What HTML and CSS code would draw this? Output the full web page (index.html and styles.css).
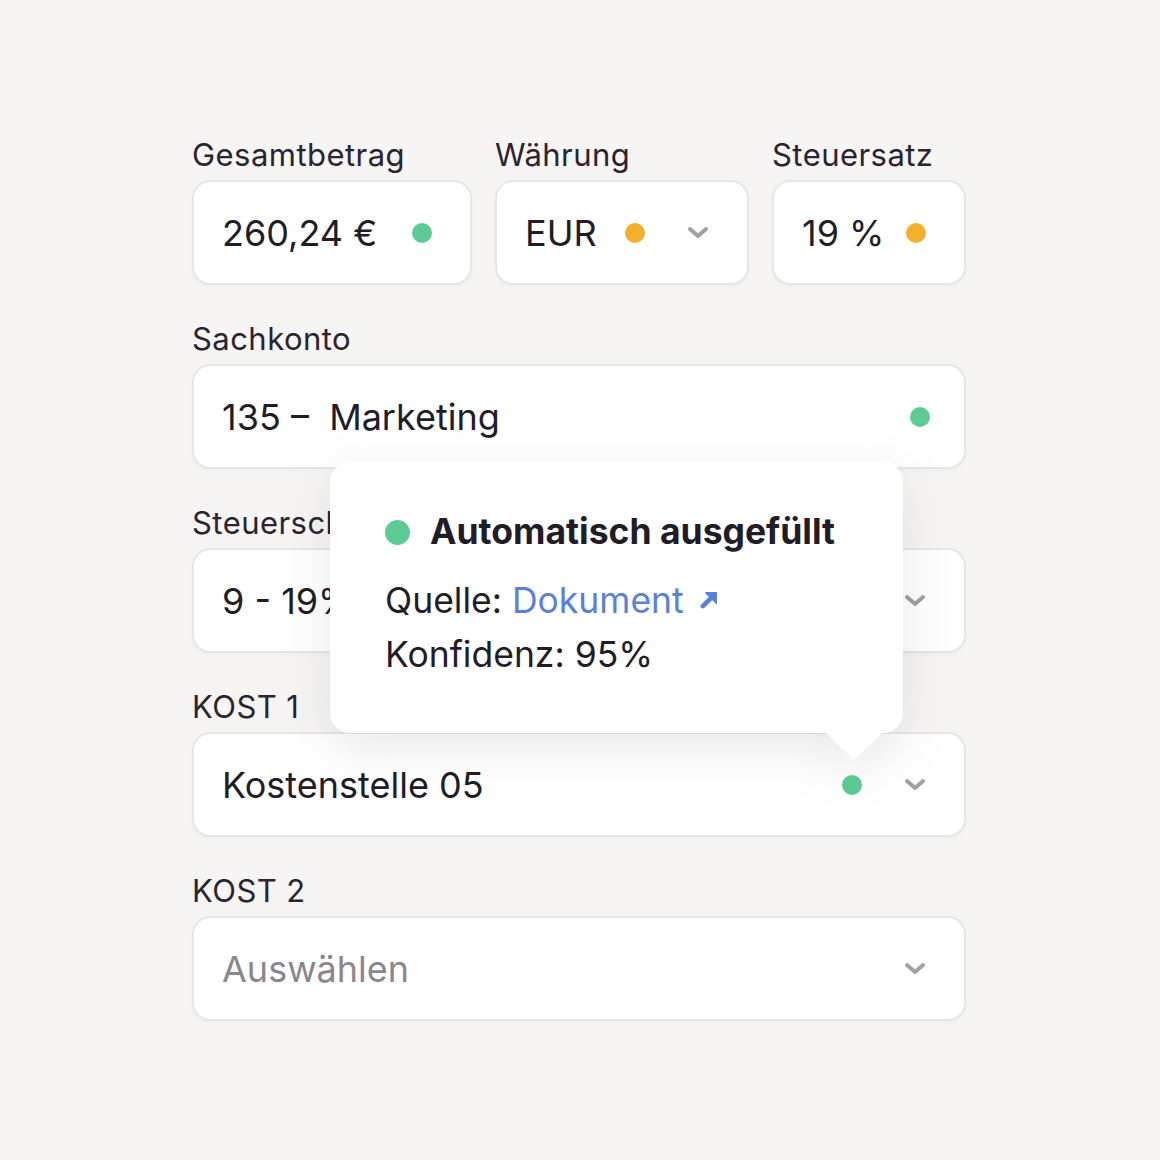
FILE: index.html
```html
<!DOCTYPE html>
<html lang="de">
<head>
<meta charset="utf-8">
<title>Formular</title>
<link rel="stylesheet" href="styles.css">
</head>
<body>
<div class="form">
  <div class="row-top">
    <div class="field">
      <div class="label">Gesamtbetrag</div>
      <div class="box"><span class="value">260,24 €</span><span class="end"><span class="dot green"></span></span></div>
    </div>
    <div class="field">
      <div class="label">Währung</div>
      <div class="box"><span class="value">EUR</span><span class="end"><span class="dot orange"></span><svg class="chev" viewBox="0 0 22 13"><path d="M3 3 L11 10 L19 3"/></svg></span></div>
    </div>
    <div class="field">
      <div class="label">Steuersatz</div>
      <div class="box"><span class="value">19 %</span><span class="end"><span class="dot orange"></span></span></div>
    </div>
  </div>
  <div class="field">
    <div class="label">Sachkonto</div>
    <div class="box wide-dot"><span class="value">135 –&nbsp; Marketing</span><span class="end"><span class="dot green"></span></span></div>
  </div>
  <div class="field">
    <div class="label">Steuerschlüssel</div>
    <div class="box"><span class="value">9 - 19% Vorsteuer</span><span class="end"><svg class="chev" viewBox="0 0 22 13"><path d="M3 3 L11 10 L19 3"/></svg></span></div>
  </div>
  <div class="field">
    <div class="label">KOST 1</div>
    <div class="box"><span class="value">Kostenstelle 05</span><span class="end"><span class="dot green"></span><svg class="chev" viewBox="0 0 22 13"><path d="M3 3 L11 10 L19 3"/></svg></span></div>
  </div>
  <div class="field">
    <div class="label">KOST 2</div>
    <div class="box"><span class="value placeholder">Auswählen</span><span class="end"><svg class="chev" viewBox="0 0 22 13"><path d="M3 3 L11 10 L19 3"/></svg></span></div>
  </div>

  <div class="tooltip">
    <div class="tt-title"><span class="dot green big"></span>Automatisch ausgefüllt</div>
    <div class="tt-line">Quelle: <span class="link">Dokument <svg class="ext" viewBox="0 0 16 16"><path class="ext-line" d="M2.5 13.5 L9.5 6.5"/><path class="ext-head" d="M5 1.5 H14.5 V11 Z"/></svg></span></div>
    <div class="tt-line">Konfidenz: 95%</div>
  </div>
</div>
</body>
</html>
```

FILE: styles.css
```css
* { box-sizing: border-box; }
html, body { margin: 0; padding: 0; }
body {
  background: #f6f5f4;
  font-family: Inter, "Noto Sans", sans-serif;
  color: #221c27;
  width: 1160px;
  height: 1160px;
  overflow: hidden;
}
.form {
  position: relative;
  width: 774px;
  margin-left: 192px;
  padding-top: 136px;
  display: flex;
  flex-direction: column;
  gap: 35px;
}
.row-top {
  display: grid;
  grid-template-columns: 280px 254px 194px;
  gap: 23px;
}
.field {
  display: flex;
  flex-direction: column;
  gap: 7px;
}
.label {
  font-size: 31px;
  line-height: 37px;
  letter-spacing: 0.45px;
  color: #2a2430;
}
.box {
  height: 105px;
  background: #fff;
  border: 2px solid #e8e6e6;
  border-radius: 18px;
  box-shadow: 0 2px 3px rgba(0,0,0,0.03);
  display: flex;
  align-items: center;
  justify-content: space-between;
  padding: 0 38px 0 28px;
}
.box.wide-dot { padding-right: 34px; }
.value {
  font-size: 36px;
  white-space: nowrap;
  color: #221c27;
}
.value.placeholder { color: #8b858c; }
.end {
  display: flex;
  align-items: center;
  gap: 42px;
}
.dot {
  display: inline-block;
  width: 20px;
  height: 20px;
  border-radius: 50%;
  flex: none;
}
.dot.green { background: #5dcb94; }
.dot.orange { background: #f3b02c; }
.chev {
  width: 22px;
  height: 13px;
  fill: none;
  stroke: #a59ea6;
  stroke-width: 4;
  stroke-linecap: round;
  stroke-linejoin: round;
}
.tooltip {
  position: absolute;
  left: 138px;
  top: 462px;
  width: 573px;
  height: 271px;
  background: #fff;
  border-radius: 20px;
  padding: 46px 30px 0 55px;
  filter: drop-shadow(0 14px 24px rgba(40,30,40,0.10));
}
.tooltip::after {
  content: "";
  position: absolute;
  left: 495px;
  bottom: -26px;
  width: 58px;
  height: 27px;
  background: #fff;
  clip-path: polygon(0 0, 100% 0, 52% 100%, 48% 100%);
}
.tt-title {
  display: flex;
  align-items: center;
  gap: 20px;
  font-size: 35.5px;
  font-weight: 700;
  line-height: 48px;
  color: #221c27;
  margin-bottom: 18px;
  white-space: nowrap;
}
.dot.big { width: 25px; height: 25px; }
.tt-line {
  font-size: 35.5px;
  line-height: 54px;
  color: #221c27;
  white-space: nowrap;
}
.link { color: #5a80dc; white-space: nowrap; }
.ext {
  width: 18px;
  height: 18px;
  margin-left: 6px;
  vertical-align: 4px;
}
.ext-line {
  fill: none;
  stroke: #5a80dc;
  stroke-width: 4;
  stroke-linecap: round;
}
.ext-head {
  fill: #5a80dc;
  stroke: #5a80dc;
  stroke-width: 1.2;
  stroke-linejoin: round;
}
```
